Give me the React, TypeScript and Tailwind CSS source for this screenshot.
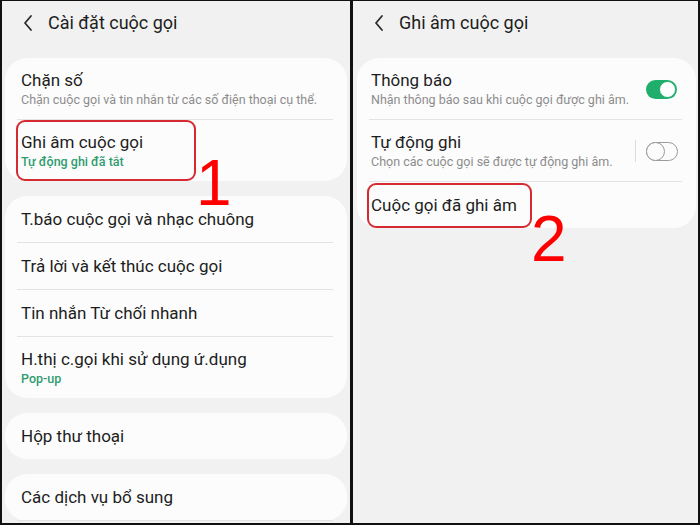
import type { ReactNode } from 'react'

const font = { fontFamily: 'Roboto, "Noto Sans", sans-serif' }

function Header({ title }: { title: string }) {
  return (
    <div className="h-[57px] flex items-start pt-[10px] pl-[20px]">
      <svg width="12" height="24" viewBox="0 0 12 24">
        <path d="M9 5 L3 12 L9 19" fill="none" stroke="#2b2b2b" strokeWidth="1.8" strokeLinecap="round" strokeLinejoin="round" />
      </svg>
      <span className="ml-[14px] text-[18px] leading-[24px] text-[#1d1d1d]">{title}</span>
    </div>
  )
}

function Card({ children }: { children: ReactNode }) {
  return <div className="bg-[#fcfcfc] rounded-[22px]">{children}</div>
}

function Divider() {
  return <div className="h-px bg-[#e3e3e3] ml-[12px] mr-[14px]" />
}

function Row({ title, sub, green, right, pl = 'pl-[16px]' }: { title: string; sub?: string; green?: boolean; right?: ReactNode; pl?: string }) {
  if (!sub) {
    return (
      <div className={`h-[46px] flex items-center pt-[2px] ${pl} pr-[14px]`}>
        <span className="text-[17px] text-[#1d1d1d]">{title}</span>
      </div>
    )
  }
  return (
    <div className={`h-[61px] flex items-center pt-px ${pl} pr-[18px]`}>
      <div className="flex-1 flex flex-col">
        <span className="text-[17px] leading-[22px] text-[#1d1d1d]">{title}</span>
        <span
          className={
            green
              ? 'text-[12.5px] leading-[18px] text-[#2f9d6f] font-medium'
              : 'text-[12.5px] leading-[18px] text-[#8c8c8c]'
          }
        >
          {sub}
        </span>
      </div>
      {right}
    </div>
  )
}

function ToggleOn() {
  return (
    <div className="w-[31px] h-[19px] mr-px rounded-full bg-[#1fae6b] flex items-center justify-end pr-px">
      <div className="w-[17px] h-[17px] rounded-full bg-white border border-[#1fae6b]" />
    </div>
  )
}

function ToggleOff() {
  return (
    <div className="flex items-center gap-[10px]">
      <div className="w-px h-[22px] bg-[#dcdcdc]" />
      <div className="w-[32px] h-[19px] rounded-full border border-[#9a9a9a] flex items-center">
        <div className="w-[19px] h-[19px] -ml-px rounded-full border border-[#9a9a9a] bg-[#fcfcfc]" />
      </div>
    </div>
  )
}

export default function App() {
  return (
    <div className="w-[700px] h-[525px] bg-[#111] pt-px pl-[2px] pr-[2px] pb-[2px] flex gap-[3px] overflow-hidden" style={font}>
      {/* left screen */}
      <div className="relative w-[348px] h-full bg-[#f1f1f1] overflow-hidden">
        <Header title="Cài đặt cuộc gọi" />
        <div className="flex flex-col gap-[15px] ml-[3px] mr-[3px]">
          <Card>
            <Row title="Chặn số" sub="Chặn cuộc gọi và tin nhắn từ các số điện thoại cụ thể." />
            <Divider />
            <Row title="Ghi âm cuộc gọi" sub="Tự động ghi đã tắt" green />
          </Card>
          <Card>
            <Row title="T.báo cuộc gọi và nhạc chuông" />
            <Divider />
            <Row title="Trả lời và kết thúc cuộc gọi" />
            <Divider />
            <Row title="Tin nhắn Từ chối nhanh" />
            <Divider />
            <Row title="H.thị c.gọi khi sử dụng ứ.dụng" sub="Pop-up" green />
          </Card>
          <Card>
            <Row title="Hộp thư thoại" />
          </Card>
          <Card>
            <Row title="Các dịch vụ bổ sung" />
            <Divider />
          </Card>
        </div>
        {/* annotation */}
        <div className="absolute left-[14px] top-[119px] w-[180px] h-[61px] border-2 border-[#d42a30] rounded-[9px]" />
        <span
          className="absolute left-[194px] top-[150px] text-[64px] leading-none text-[#ff0000]"
          style={{ fontFamily: '"Liberation Sans", Arial, sans-serif' }}
        >
          1
        </span>
      </div>

      {/* right screen */}
      <div className="relative flex-1 h-full bg-[#f1f1f1] overflow-hidden">
        <Header title="Ghi âm cuộc gọi" />
        <div className="ml-[4px] mr-[2px]">
          <Card>
            <Row pl="pl-[14px]" title="Thông báo" sub="Nhận thông báo sau khi cuộc gọi được ghi âm." right={<ToggleOn />} />
            <Divider />
            <Row pl="pl-[14px]" title="Tự động ghi" sub="Chọn các cuộc gọi sẽ được tự động ghi âm." right={<ToggleOff />} />
            <Divider />
            <Row pl="pl-[14px]" title="Cuộc gọi đã ghi âm" />
          </Card>
        </div>
        <div className="absolute left-[14px] top-[182px] w-[165px] h-[45px] border-2 border-[#d42a30] rounded-[9px]" />
        <span
          className="absolute left-[178px] top-[206px] text-[64px] leading-none text-[#ff0000]"
          style={{ fontFamily: '"Liberation Sans", Arial, sans-serif' }}
        >
          2
        </span>
      </div>
    </div>
  )
}
